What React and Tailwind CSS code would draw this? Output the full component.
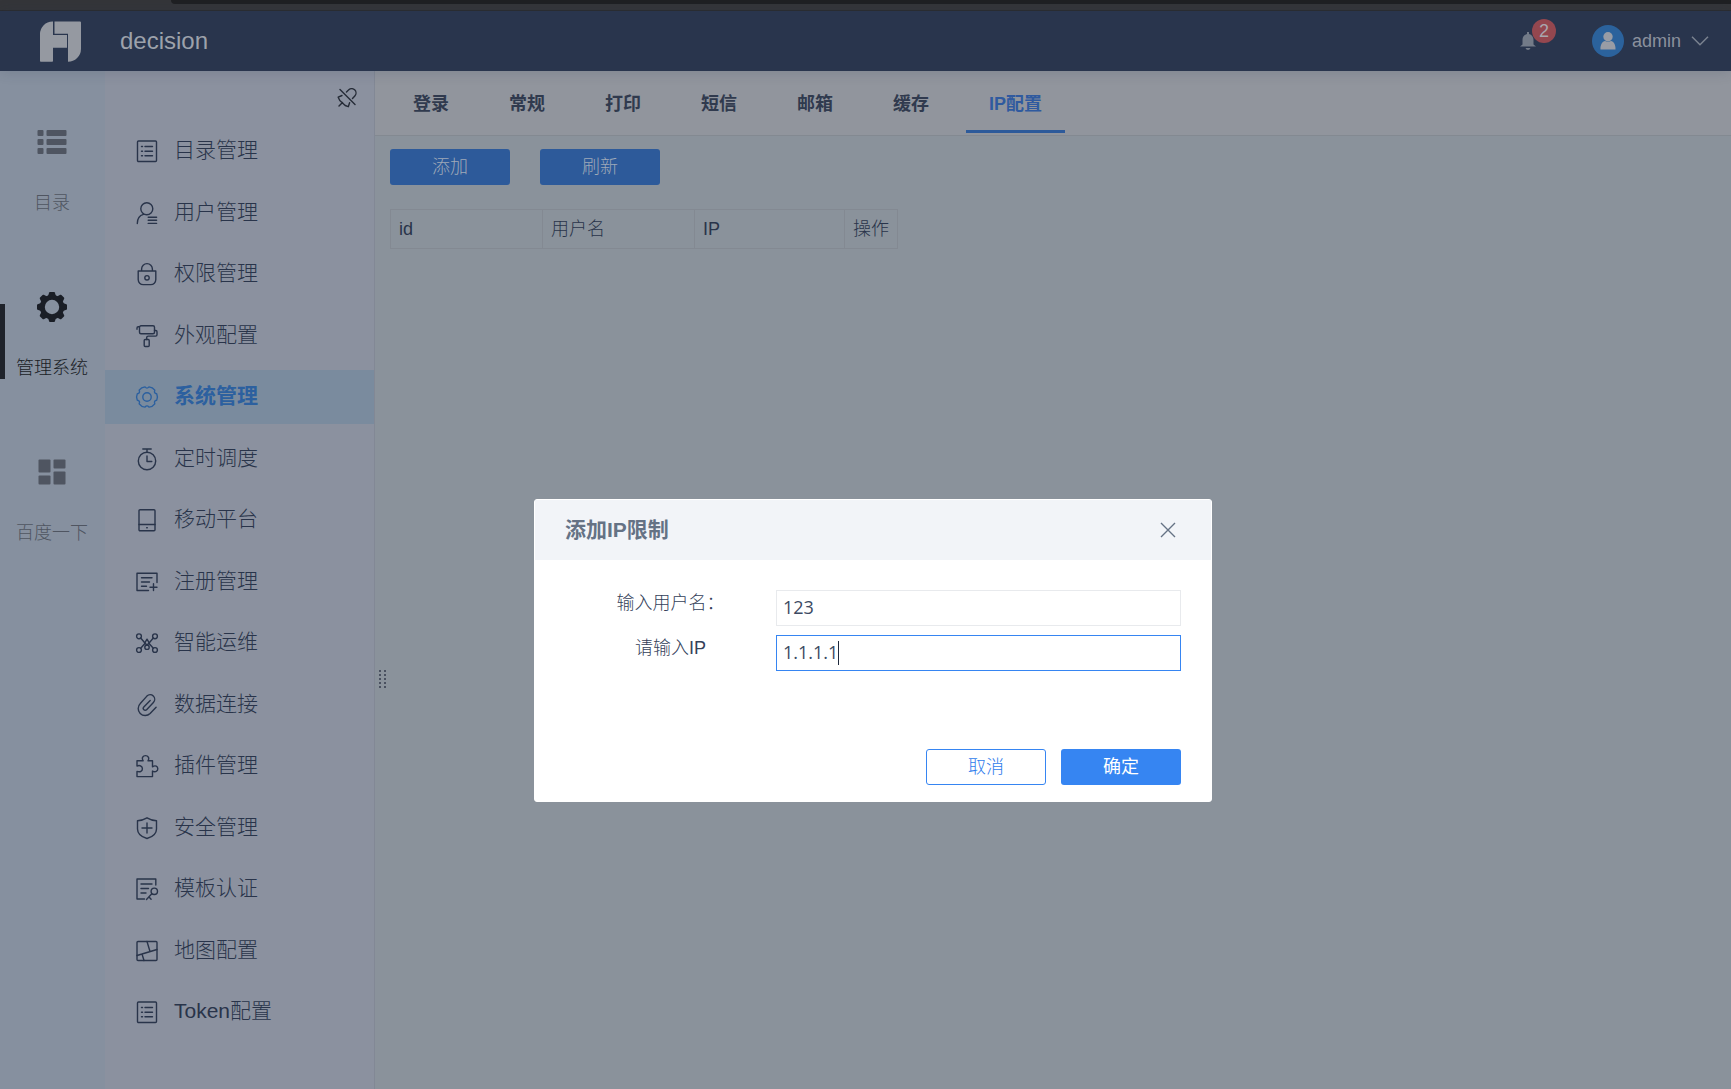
import { useState } from 'react'

const stroke = {
  fill: 'none',
  stroke: 'currentColor',
  strokeWidth: 1.4,
  strokeLinecap: 'round',
  strokeLinejoin: 'round',
}

function Icon({ children }) {
  return (
    <svg viewBox="0 0 22 22" className="w-[22px] h-[22px] shrink-0 overflow-visible" {...stroke} aria-hidden="true">
      {children}
    </svg>
  )
}

const icons = {
  list: (
    <>
      <rect x="1.5" y="1" width="19" height="20.5" rx="1" />
      <path d="M5.5 6.5h1M9 6.5h7.5M5.5 11.3h1M9 11.3h7.5M5.5 15.8h1M9 15.8h7.5" />
    </>
  ),
  user: (
    <>
      <circle cx="10.8" cy="6.8" r="6" />
      <path d="M1.3 21.6c0-5 2.4-8.2 6.2-9.2M12.2 15.2h8.4M12.2 18.3h8.4M12.2 21.4h8.4" />
    </>
  ),
  lock: (
    <>
      <path d="M2.2 8h17.6v8.6a5 5 0 0 1-5 5H7.2a5 5 0 0 1-5-5zM5.6 8V6a5.4 5.4 0 0 1 10.8 0v2" />
      <circle cx="11" cy="14.8" r="2.2" />
    </>
  ),
  roller: (
    <>
      <path d="M1 4.2V3q0-1.2 1.2-1.2h1.3M18.5 5.5h1.3q1.2 0 1.2 1.2v3q0 1.4-1.4 1.4h-7.4q-1.5 0-1.5 1.5v1.9" />
      <rect x="3.5" y="0.7" width="15" height="8" rx="1.5" />
      <rect x="8.2" y="14.5" width="5" height="7" rx="1" />
    </>
  ),
  gear: (
    <>
      <path d="M20.7 7.7Q22.2 11 20.7 14.3Q17.6 14.6 18.8 17.8Q16.7 20.700 13 21.1Q11 18.7 9 21.1Q5.3 20.7 3.2 17.8Q4.4 14.6 1.3 14.3Q-.2 11 1.3 7.7Q4.4 7.4 3.2 4.2Q5.3 1.3 9 .9Q11 3.3 13 .9Q16.7 1.3 18.8 4.2Q17.6 7.4 20.7 7.7z" />
      <circle cx="11" cy="11" r="4.2" />
    </>
  ),
  clock: (
    <>
      <circle cx="11" cy="13" r="8.7" />
      <path d="M6.8 1h8.4M11 1v3M11 8v5.5h4.8" />
    </>
  ),
  tablet: (
    <>
      <rect x="3" y="0.7" width="16" height="21" rx="1" />
      <path d="M3 15.5h16M10.7 18.7h.6" />
    </>
  ),
  register: (
    <path d="M21 11.5V2.2H1v17.3h11.5M5.5 6.8H16M5.5 11h8M5.5 15.3h5M17.5 12.8v6.8M14 16.2h7" />
  ),
  ops: (
    <>
      <circle cx="3" cy="4.3" r="2.4" />
      <circle cx="19" cy="4.3" r="2.4" />
      <circle cx="3" cy="18" r="2.4" />
      <circle cx="19" cy="18" r="2.4" />
      <path d="M4.7 6l4.2 5M17.3 6l-4.2 5M4.7 16.3l4.2-4.8M17.3 16.3l-4.2-4.8" />
      <path d="M11 7.2l2.2 3.6L11 13.2l-2.200-2.4z" />
      <circle cx="11" cy="15.2" r="2.2" />
    </>
  ),
  clip: (
    <path d="M14.2 6.5L7.8 13a1.9 1.9 0 0 0 2.8 2.7l6.8-7.3a4.5 4.5 0 0 0-6.500-6.300L4.300 9.500a7 7 0 0 0 9.800 10l6-6.300" />
  ),
  puzzle: (
    <path d="M1 5.8h6.2C5.3 2.9 7 .6 9.5 .6s4.2 2.3 2.5 5.2h4.500v6c2.900-1.900 5.300-.4 5.300 2s-2.400 3.900-5.300 2.200v5.600H1v-5.200c3.200 1.200 5.400-.4 5.400-2.700S4.200 9.800 1 11z" />
  ),
  shield: (
    <>
      <path d="M11 .8q4.6 2.7 9.5 3v8.1c0 4.800-4.200 8-9.500 9.600-5.300-1.600-9.500-4.800-9.500-9.600V3.800q4.900-.3 9.500-3z" />
      <path d="M11 6v10M6 11h10" />
    </>
  ),
  cert: (
    <>
      <path d="M19.8 7V1H1v20h7.5M5 6h11M5 10.5h7.5M5 15h5M15.800 15.800l-5.300 5.600M12.800 18.800l2.300 2.400" />
      <circle cx="18.3" cy="13.3" r="3.2" />
    </>
  ),
  map: (
    <>
      <rect x="1" y="1.5" width="20" height="19" rx="1" />
      <path d="M1 15.5l20-6M11 1.500l3 10M6 14l2 6.500" />
    </>
  ),
}

const menu = [
  { label: '目录管理', icon: 'list' },
  { label: '用户管理', icon: 'user' },
  { label: '权限管理', icon: 'lock' },
  { label: '外观配置', icon: 'roller' },
  { label: '系统管理', icon: 'gear', active: true },
  { label: '定时调度', icon: 'clock' },
  { label: '移动平台', icon: 'tablet' },
  { label: '注册管理', icon: 'register' },
  { label: '智能运维', icon: 'ops' },
  { label: '数据连接', icon: 'clip' },
  { label: '插件管理', icon: 'puzzle' },
  { label: '安全管理', icon: 'shield' },
  { label: '模板认证', icon: 'cert' },
  { label: '地图配置', icon: 'map' },
  { label: 'Token配置', icon: 'list' },
]

const tabs = ['登录', '常规', '打印', '短信', '邮箱', '缓存', 'IP配置']

function Header() {
  return (
    <header className="relative h-[60px] shrink-0 bg-[#29354d] flex items-center pl-10 pr-[22px] text-[#9da2ab] shadow-[0_1px_12px_rgba(41,53,77,0.18)]">
      <svg viewBox="0 0 41 41" className="w-[41px] h-[41px]" fill="#9599a1" aria-hidden="true">
        <path d="M0 40V13A12.5 12.5 0 0 1 12.5.5H13V14H27V26.7H13V40q0 .8-.8.8H.8Q0 40.8 0 40z" />
        <path d="M14.5.5H40q1 0 1 1V28A13 13 0 0 1 28 40.8V12.8H14.5z" />
      </svg>
      <h1 className="ml-[39px] text-2xl font-normal">decision</h1>

      <div className="ml-auto flex items-center">
        <button type="button" aria-label="消息" className="relative w-4 h-[18px] mr-14 text-[#737b88]">
          <svg viewBox="0 0 16 18" className="w-4 h-[18px]" fill="currentColor" aria-hidden="true">
            <path d="M7 0h2v2c3 .7 4.5 3 4.5 6v4.5L16 14.5H0l2.5-2V8C2.5 5 4 2.7 7 2zM5.5 16h5q-.7 2-2.5 2t-2.5-2z" />
          </svg>
          <span className="absolute -top-[13px] left-3 w-6 h-6 rounded-full bg-[#94474f] text-[#a9a6ad] text-lg leading-6 text-center">2</span>
        </button>
        <button type="button" className="flex items-center text-lg text-[#8b919d]">
          <span className="w-8 h-8 rounded-full bg-[#2b629c] flex items-center justify-center mr-2">
            <svg viewBox="0 0 16 18" className="w-4 h-[18px]" fill="#989ca5" aria-hidden="true">
              <circle cx="8" cy="4.7" r="4.7" />
              <path d="M.5 17.5C.2 12.5 2.5 9.5 5 9q3 1.5 6 0c2.5.5 4.8 3.5 4.5 8.5z" />
            </svg>
          </span>
          admin
          <svg viewBox="0 0 18 10" className="w-[18px] h-[10px] ml-[10px]" fill="none" stroke="#7b8390" strokeWidth="1.5" aria-hidden="true">
            <path d="M1 .8l8 8 8-8" />
          </svg>
        </button>
      </div>
    </header>
  )
}

function RailItem({ label, active, children }) {
  return (
    <a href="#" className={`relative flex flex-col items-center h-[165px] pr-px text-lg leading-6 font-light ${active ? 'text-[#1a1e26]' : 'text-[#4f5561]'}`}>
      {active && <span className="absolute left-0 top-[53px] w-[5px] h-[75px] bg-[#1f232b]" />}
      <span className="mt-[41px] h-[30px] flex items-center justify-center">{children}</span>
      <span className="mt-[34px]">{label}</span>
    </a>
  )
}

function Rail() {
  return (
    <nav className="w-[105px] shrink-0 bg-[#86909f] pt-[15px]">
      <RailItem label="目录">
        <svg viewBox="0 0 30 26" className="w-[30px] h-[26px]" fill="currentColor" aria-hidden="true">
          <rect x="0.5" y="1" width="6" height="6" rx="1" />
          <rect x="9.5" y="1" width="20" height="6" rx="1" />
          <rect x="0.5" y="10" width="6" height="6" rx="1" />
          <rect x="9.5" y="10" width="20" height="6" rx="1" />
          <rect x="0.5" y="19" width="6" height="6" rx="1" />
          <rect x="9.5" y="19" width="20" height="6" rx="1" />
        </svg>
      </RailItem>
      <RailItem label="管理系统" active>
        <svg viewBox="-15 -15 30 30" className="w-[30px] h-[30px]" fill="currentColor" aria-hidden="true">
          <circle r="9.7" fill="none" stroke="currentColor" strokeWidth="5" />
          {[0, 45, 90, 135, 180, 225, 270, 315].map(a => (
            <path key={a} transform={`rotate(${a})`} d="M-4-11l1.2-3.4q.3-.7 1-.7h3.600q.7 0 1 .7L4-11z" />
          ))}
        </svg>
      </RailItem>
      <RailItem label="百度一下">
        <svg viewBox="0 0 28 26" className="w-7 h-[26px]" fill="currentColor" aria-hidden="true">
          <rect x="0.5" y="0.5" width="12" height="13" rx="1" />
          <rect x="15.5" y="0.5" width="12" height="9" rx="1" />
          <rect x="0.5" y="16.5" width="12" height="9" rx="1" />
          <rect x="15.5" y="12.5" width="12" height="13" rx="1" />
        </svg>
      </RailItem>
    </nav>
  )
}

function Sidebar() {
  return (
    <aside className="w-[270px] shrink-0 bg-[#8b919f] border-r border-[#828895]">
      <div className="h-[53px] flex justify-end pt-[17px] pr-[17px]">
        <button type="button" aria-label="取消固定" className="h-5 text-[#252b36]">
          <svg viewBox="0 0 20 20" className="w-5 h-5" {...stroke} aria-hidden="true">
            <path d="M3 1.500L18 16.500M9.500 4l2-2a4.300 4.300 0 0 1 6.300 6l-2.300 2.500M5 7.500L1.200 9.200l1.600 3.300 5.400 5 3.100 1.200 1.300-4M5.500 14.500L2 18" />
          </svg>
        </button>
      </div>
      <ul className="h-[915px] flex flex-col justify-between">
        {menu.map(item => (
          <li key={item.label}>
            <a
              href="#"
              className={`flex items-center gap-4 h-[54px] pl-[31px] text-[21px] ${
                item.active ? 'bg-[#7a8b9e] text-[#2c609f] font-bold' : 'text-[#29344a] font-light'
              }`}
            >
              <Icon>{icons[item.icon]}</Icon>
              <span className="pb-0.5">{item.label}</span>
            </a>
          </li>
        ))}
      </ul>
    </aside>
  )
}

function Content() {
  return (
    <main className="flex-1 min-w-0">
      <div role="tablist" className="h-[65px] flex gap-[14px] pl-[15px] bg-[#91959d] border-b border-[#838991]">
        {tabs.map(t => {
          const on = t === 'IP配置'
          return (
            <button
              key={t}
              type="button"
              role="tab"
              aria-selected={on}
              className={`h-[62px] px-[23px] pt-1.5 text-lg font-bold border-b-3 ${
                on ? 'text-[#2f5a9f] border-[#2d5a9a]' : 'text-[#303a4e] border-transparent'
              }`}
            >
              {t}
            </button>
          )
        })}
      </div>
      <div className="pl-[15px] pt-[13px]">
        <div className="flex gap-[30px]">
          <button type="button" className="w-[120px] h-9 rounded-[3px] bg-[#2d5a9a] text-[#9fa9b8] text-lg font-light">添加</button>
          <button type="button" className="w-[120px] h-9 rounded-[3px] bg-[#2d5a9a] text-[#9fa9b8] text-lg font-light">刷新</button>
        </div>
        <table className="mt-6 w-[508px] h-10 table-fixed border-collapse text-lg text-[#29344a]">
          <thead>
            <tr className="text-left">
              <th className="w-[152px] px-2 font-light border border-[#838992]">id</th>
              <th className="w-[152px] px-2 font-light border border-[#838992]">用户名</th>
              <th className="w-[150px] px-2 font-light border border-[#838992]">IP</th>
              <th className="pl-2 font-light border border-[#838992] whitespace-nowrap">操作</th>
            </tr>
          </thead>
        </table>
      </div>
    </main>
  )
}

function AddIpDialog() {
  const [name, setName] = useState('123')
  const [ip, setIp] = useState('1.1.1.1')

  return (
    <div className="fixed inset-0 flex items-center justify-center pt-[212px] pl-[15px]">
      <form role="dialog" aria-labelledby="dlg-title" className="w-[678px] bg-white border border-white rounded-[3px]">
        <div className="h-[60px] flex items-center justify-between bg-[#f2f4f8] pl-[30px] pr-[35px]">
          <h2 id="dlg-title" className="text-[21px] font-bold text-[#657285]">添加IP限制</h2>
          <button type="button" aria-label="关闭">
            <svg viewBox="0 0 16 16" className="w-4 h-4" fill="none" stroke="#657285" strokeWidth="1.4" aria-hidden="true">
              <path d="M1 1l14 14M15 1L1 15" />
            </svg>
          </button>
        </div>

        <div className="px-[30px] pt-[30px] pb-4">
          <div className="flex">
            <label htmlFor="name" className="w-[211px] text-center text-lg leading-[27px] font-light text-[#34415a]">输入用户名：</label>
            <input
              id="name"
              value={name}
              onChange={e => setName(e.target.value)}
              className="flex-1 h-9 px-1.5 pb-0.5 border border-[#e8eaed] text-lg text-[#3d4a63] font-['Open_Sans',sans-serif] outline-none"
            />
          </div>
          <div className="flex mt-[9px]">
            <label htmlFor="ip" className="w-[211px] text-center text-lg leading-[27px] font-light text-[#34415a]">请输入IP</label>
            <div className="relative flex-1 flex">
              <input
                id="ip"
                value={ip}
                onChange={e => setIp(e.target.value)}
                className="flex-1 h-9 px-1.5 pb-0.5 border border-[#3685f2] text-lg text-[#3d4a63] font-['Open_Sans',sans-serif] outline-none caret-transparent"
              />
              <span className="absolute left-[62px] top-1.5 w-px h-6 bg-[#1f2a3d]" />
            </div>
          </div>
          <div className="flex justify-end gap-[15px] mt-[78px]">
            <button type="button" className="w-[120px] h-9 rounded-[3px] border border-[#3685f2] text-[#2f7cec] text-lg font-light">取消</button>
            <button type="button" className="w-[120px] h-9 rounded-[3px] bg-[#3685f2] text-white text-lg font-normal">确定</button>
          </div>
        </div>
      </form>
    </div>
  )
}

export default function App() {
  return (
    <div className="min-h-screen flex flex-col bg-[#8a929b] font-['Liberation_Sans','Noto_Sans_CJK_SC',sans-serif]">
      <div className="h-[11px] shrink-0 bg-[#343539] border-b border-[#2b2c30] pl-[171px]">
        <div className="h-1 bg-[#1f2023] rounded-bl-lg" />
      </div>
      <Header />
      <div className="flex-1 flex">
        <Rail />
        <Sidebar />
        <Content />
      </div>
      {/* 侧栏拖动手柄 */}
      <div className="absolute left-[379px] top-[670px] grid grid-cols-2 gap-x-[3px] gap-y-0.5">
        {Array.from({ length: 10 }, (_, i) => (
          <span key={i} className="w-0.5 h-0.5 bg-[#4a5160]" />
        ))}
      </div>
      <AddIpDialog />
    </div>
  )
}
